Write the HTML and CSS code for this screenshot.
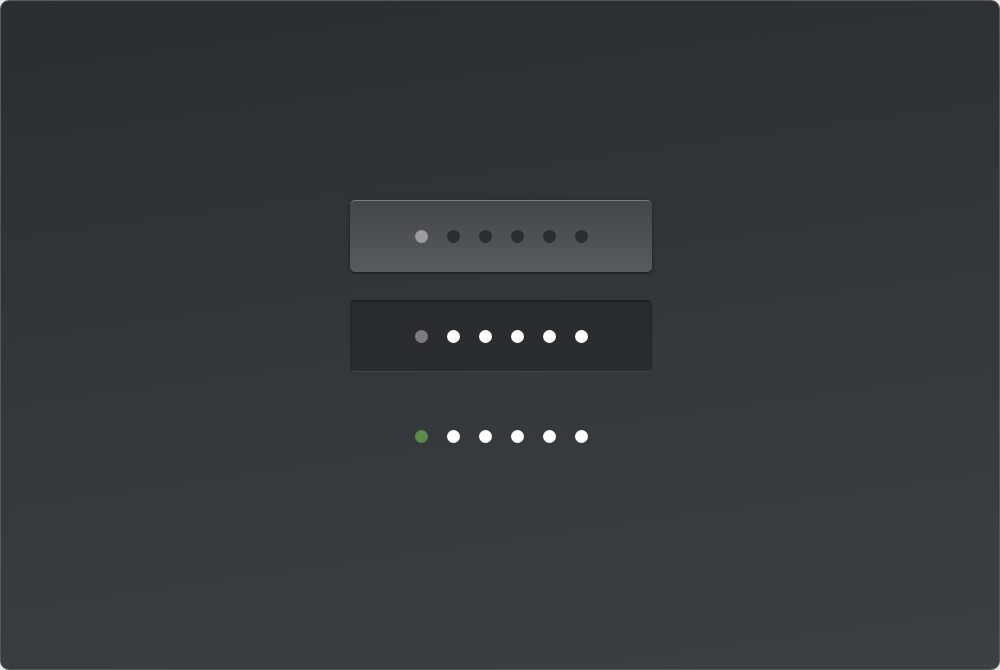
FILE: index.html
```html
<!DOCTYPE html>
<html>
<head>
<meta charset="utf-8">
<link rel="stylesheet" href="styles.css">
</head>
<body>
<div class="panel">
  <div class="field raised">
    <span class="dot cur"></span><span class="dot"></span><span class="dot"></span><span class="dot"></span><span class="dot"></span><span class="dot"></span>
  </div>
  <div class="field sunken">
    <span class="dot cur"></span><span class="dot"></span><span class="dot"></span><span class="dot"></span><span class="dot"></span><span class="dot"></span>
  </div>
  <div class="field plain">
    <span class="dot cur"></span><span class="dot"></span><span class="dot"></span><span class="dot"></span><span class="dot"></span><span class="dot"></span>
  </div>
</div>
</body>
</html>
```
FILE: styles.css
```css
html, body {
  margin: 0;
  padding: 0;
  background: #e6e6e6;
}
.panel {
  box-sizing: border-box;
  width: 1000px;
  height: 670px;
  border: 1px solid #55595c;
  border-radius: 9px;
  background: linear-gradient(172deg, #2a2e31 0%, #33383a 55%, #3b4042 100%);
  display: flex;
  flex-direction: column;
  align-items: center;
  justify-content: center;
  gap: 28px;
  padding-left: 2px;
  padding-top: 2px;
}
.field {
  box-sizing: border-box;
  width: 302px;
  height: 72px;
  border-radius: 5px;
  display: flex;
  align-items: center;
  justify-content: center;
  gap: 19px;
}
.dot {
  width: 13px;
  height: 13px;
  border-radius: 50%;
  background: #fff;
}
.raised {
  background: linear-gradient(#43474b, #575b5f);
  border-top: 1px solid #777b7e;
  box-shadow: 0 1px 3px rgba(0, 0, 0, 0.55);
  padding-bottom: 1px;
}
.raised .dot { background: #2b2e31; }
.raised .dot.cur { background: #9b9d9f; }
.sunken {
  background: #2a2d30;
  border: 1px solid #26292b;
  border-top-color: #1d1f21;
  border-bottom-color: #44484b;
  box-shadow: inset 0 1px 2px rgba(0, 0, 0, 0.35);
}
.sunken .dot.cur { background: #7b7d7f; }
.plain .dot.cur { background: #5b8c4a; }
```
